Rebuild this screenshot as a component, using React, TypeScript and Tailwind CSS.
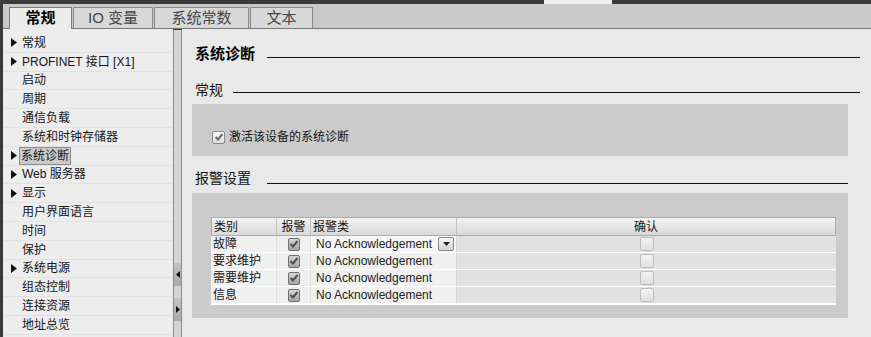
import React from "react";

const navItems: { label: string; arrow?: boolean; selected?: boolean }[] = [
  { label: "常规", arrow: true },
  { label: "PROFINET 接口 [X1]", arrow: true },
  { label: "启动" },
  { label: "周期" },
  { label: "通信负载" },
  { label: "系统和时钟存储器" },
  { label: "系统诊断", arrow: true, selected: true },
  { label: "Web 服务器", arrow: true },
  { label: "显示", arrow: true },
  { label: "用户界面语言" },
  { label: "时间" },
  { label: "保护" },
  { label: "系统电源", arrow: true },
  { label: "组态控制" },
  { label: "连接资源" },
  { label: "地址总览" },
];

const alarmRows = ["故障", "要求维护", "需要维护", "信息"];

const Arrow = () => (
  <svg width="6" height="9" viewBox="0 0 6 9" className="shrink-0">
    <path d="M0 0 L6 4.5 L0 9 Z" fill="#111" />
  </svg>
);

const CheckMark = ({ color }: { color: string }) => (
  <svg width="10" height="10" viewBox="0 0 10 10">
    <path d="M1.5 5 L4 7.5 L8.5 2" stroke={color} strokeWidth="2" fill="none" />
  </svg>
);

// read-only checked box used in the alarm column
const GrayCheck = () => (
  <div className="w-[12px] h-[13px] border border-[#707070] rounded-[2px] bg-gradient-to-b from-[#d6d6d6] to-[#a4a4a4] flex items-center justify-center">
    <CheckMark color="#505050" />
  </div>
);

const EmptyBox = () => (
  <div className="w-[14px] h-[14px] border border-[#bdbdbd] rounded-[2px] bg-gradient-to-b from-[#f4f4f4] to-[#e0e0e0]" />
);

const SectionTitle = ({
  title,
  bold,
  lineClass,
}: {
  title: string;
  bold?: boolean;
  lineClass: string;
}) => (
  <div className="flex items-center h-[20px] pl-[3px]">
    <span
      className={
        bold
          ? "text-[15px] font-bold text-black leading-none"
          : "text-[14px] text-[#111] leading-none"
      }
    >
      {title}
    </span>
    <div className={lineClass} />
  </div>
);

export default function App() {
  return (
    <div className="w-[871px] h-[337px] overflow-hidden bg-[#3b3b3b] flex flex-col font-['Liberation_Sans','Noto_Sans_CJK_SC',sans-serif] text-[12px] text-[#161616]">
      {/* top strip */}
      <div className="h-[4px] flex shrink-0">
        <div className="w-[544px]" />
        <div className="w-[68px] bg-[#efefef]" />
      </div>

      <div className="flex-1 flex flex-col pl-[3px] min-h-0">
        {/* tabs */}
        <div className="h-[25px] shrink-0 bg-[#c9c9c9] border-b border-[#767676] flex items-end pl-[6px] gap-px">
          <div className="w-[63px] h-[22px] -mb-px bg-[#ececec] border border-b-0 border-[#7c7c7c] flex items-center justify-center text-[15px] font-bold text-black">
            常规
          </div>
          <div className="w-[80px] h-[21px] bg-[#d8d8d8] border border-b-0 border-[#8a8a8a] flex items-center justify-center text-[15px] text-[#474747]">
            IO 变量
          </div>
          <div className="w-[95px] h-[21px] bg-[#d8d8d8] border border-b-0 border-[#8a8a8a] flex items-center justify-center text-[15px] text-[#474747]">
            系统常数
          </div>
          <div className="w-[63px] h-[21px] bg-[#d8d8d8] border border-b-0 border-[#8a8a8a] flex items-center justify-center text-[15px] text-[#474747]">
            文本
          </div>
        </div>

        <div className="flex-1 flex min-h-0">
          {/* navigation tree */}
          <div className="w-[170px] bg-[#ededed] pt-[5px] flex flex-col">
            {navItems.map((item) => (
              <div
                key={item.label}
                className="h-[18.8px] shrink-0 flex items-center border-b border-[#e2e2e2] pl-[8px]"
              >
                <div className="w-[9px] flex items-center">{item.arrow && <Arrow />}</div>
                <span
                  className={
                    item.selected
                      ? "h-[18px] flex items-center px-[1px] -ml-[1px] bg-[#cbcbcb] border border-[#8d8d8d] leading-none"
                      : "leading-none pl-[2px]"
                  }
                >
                  {item.label}
                </span>
              </div>
            ))}
          </div>

          {/* splitter */}
          <div className="w-[9px] mt-[1px] bg-[#d4d4d4] border-x border-[#8a8a8a] flex flex-col">
            <div className="h-[233px]" />
            <div className="h-[23px] bg-gradient-to-b from-[#c4c4c4] to-[#aaaaaa] flex items-center justify-center">
              <svg width="4" height="7" viewBox="0 0 4 7">
                <path d="M4 0 L0 3.5 L4 7 Z" fill="#111" />
              </svg>
            </div>
            <div className="h-[12px]" />
            <div className="h-[23px] bg-gradient-to-b from-[#c4c4c4] to-[#aaaaaa] flex items-center justify-center">
              <svg width="4" height="7" viewBox="0 0 4 7">
                <path d="M0 0 L4 3.5 L0 7 Z" fill="#111" />
              </svg>
            </div>
          </div>

          {/* content */}
          <div className="flex-1 bg-[#e9e9e9] pt-[14px] pl-[10px] pr-[23px] flex flex-col">
            <SectionTitle
              title="系统诊断"
              bold
              lineClass="flex-1 h-px bg-[#111] mt-[8px] ml-[12px] -mr-[12px]"
            />
            <div className="h-[17px]" />
            <SectionTitle
              title="常规"
              lineClass="flex-1 h-px bg-[#111] mt-[4px] ml-[10px] -mr-[12px]"
            />
            <div className="mt-[4px] h-[52px] bg-[#cbcbcb] flex items-end pb-[12px] pl-[20px]">
              <div className="flex items-center gap-[4px] h-[14px]">
                <div className="w-[13px] h-[13px] border border-[#8a8a8a] rounded-[2px] bg-gradient-to-b from-[#fbfbfb] to-[#dedede] flex items-center justify-center">
                  <CheckMark color="#6a6a6a" />
                </div>
                <span className="leading-none">激活该设备的系统诊断</span>
              </div>
            </div>

            <div className="h-[12px]" />
            <SectionTitle
              title="报警设置"
              lineClass="flex-1 h-px bg-[#111] mt-[10px] ml-[16px]"
            />
            <div className="mt-[5px] h-[125px] bg-[#cbcbcb] pt-[24px] pl-[19px] pr-[12px]">
              <div className="grid grid-cols-[66px_34px_146px_1fr] border-b border-white">
                {/* header */}
                <div className="h-[19px] flex items-center pl-[2px] bg-gradient-to-b from-[#f3f3f3] to-[#d9d9d9] border border-[#ababab] border-r-[#c0c0c0]">
                  类别
                </div>
                <div className="h-[19px] flex items-center justify-center bg-gradient-to-b from-[#f3f3f3] to-[#d9d9d9] border-y border-r border-[#ababab] border-r-[#c0c0c0]">
                  报警
                </div>
                <div className="h-[19px] flex items-center pl-[2px] bg-gradient-to-b from-[#f3f3f3] to-[#d9d9d9] border-y border-r border-[#ababab] border-r-[#c0c0c0]">
                  报警类
                </div>
                <div className="h-[19px] flex items-center justify-center bg-gradient-to-b from-[#f3f3f3] to-[#d9d9d9] border-y border-r border-[#ababab]">
                  确认
                </div>

                {alarmRows.map((name, i) => (
                  <React.Fragment key={name}>
                    <div className="h-[17px] flex items-center pl-[2px] bg-[#f0f0f0] border-b border-r border-[#e0e0e0] border-b-white">
                      {name}
                    </div>
                    <div className="h-[17px] flex items-center justify-center bg-[#efefef] border-b border-r border-[#e0e0e0] border-b-white">
                      <GrayCheck />
                    </div>
                    <div
                      className={
                        i === 0
                          ? "h-[17px] flex items-center justify-between pl-[5px] pr-[2px] bg-[#f7f7f7] border-b border-r border-[#d6d6d6] border-b-white"
                          : "h-[17px] flex items-center pl-[5px] bg-[#f0f0f0] border-b border-r border-[#d6d6d6] border-b-white"
                      }
                    >
                      <span className="leading-none text-[#222]">No Acknowledgement</span>
                      {i === 0 && (
                        <div className="w-[16px] h-[14px] border border-[#8a8a8a] rounded-[2px] bg-gradient-to-b from-[#f7f7f7] to-[#d2d2d2] flex items-center justify-center">
                          <svg width="7" height="4" viewBox="0 0 7 4">
                            <path d="M0 0 L7 0 L3.5 4 Z" fill="#222" />
                          </svg>
                        </div>
                      )}
                    </div>
                    <div className="h-[17px] flex items-center justify-center bg-[#e2e2e2] border-b border-white">
                      <EmptyBox />
                    </div>
                  </React.Fragment>
                ))}
              </div>
            </div>
          </div>
        </div>
      </div>
    </div>
  );
}
